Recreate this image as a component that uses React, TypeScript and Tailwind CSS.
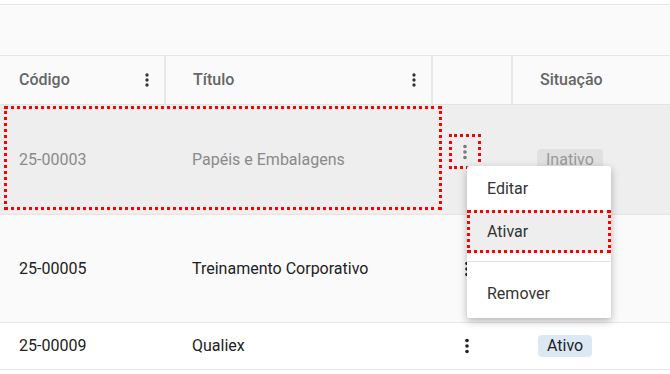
import React from 'react';

const Kebab: React.FC<{ size?: number; color?: string }> = ({ size = 20, color = '#333' }) => (
  <svg width={size} height={size} viewBox="0 0 24 24" fill={color}>
    <circle cx="12" cy="6" r="2" />
    <circle cx="12" cy="12" r="2" />
    <circle cx="12" cy="18" r="2" />
  </svg>
);

const cols = 'grid grid-cols-[166px_267px_80px_1fr]';

export default function App() {
  return (
    <div className="w-[670px] h-[374px] overflow-hidden bg-white font-['Roboto',sans-serif] text-base relative">
      <div className="h-[4px] bg-white" />
      <div className="h-[52px] bg-[#fafafa] border-y border-[#e6e6e6]" />

      {/* header */}
      <div className={`${cols} h-[48px] bg-[#fafafa] text-[#666] font-medium`}>
        <div className="flex items-center justify-between pl-[19px] pr-[7px] border-r-2 border-[#e8e8e8]">
          <span>Código</span>
          <Kebab size={20} />
        </div>
        <div className="flex items-center justify-between pl-[27px] pr-[7px] border-r-2 border-[#e8e8e8]">
          <span>Título</span>
          <Kebab size={20} />
        </div>
        <div className="border-r-2 border-[#e8e8e8]" />
        <div className="flex items-center pl-[27px]">Situação</div>
      </div>

      {/* row 1 (disabled) */}
      <div className={`${cols} h-[110px] bg-[#eeeeee] border-t border-[#e4e4e4] text-[#8a8a8a] relative`}>
        <div className="flex items-center pl-[19px]">25-00003</div>
        <div className="flex items-center pl-[26px]">Papéis e Embalagens</div>
        <div className="flex items-start pl-[16px] pt-[29px]">
          <div className="w-[32px] h-[35px] flex items-center justify-center border-[3px] border-dotted border-[#f00]">
            <Kebab size={22} color="#7a7a7a" />
          </div>
        </div>
        <div className="flex items-center pl-[24px]">
          <span className="bg-[#e0e0e0] text-[#999] rounded-[4px] px-[9px] h-[22px] leading-[22px]">Inativo</span>
        </div>
        <div className="absolute left-[4px] top-[1px] w-[438px] h-[104px] border-[3px] border-dotted border-[#f00]" />
      </div>

      {/* row 2 */}
      <div className={`${cols} h-[108px] bg-[#fafafa] border-t border-[#e4e4e4] text-[#222]`}>
        <div className="flex items-center pl-[19px]">25-00005</div>
        <div className="flex items-center pl-[26px]">Treinamento Corporativo</div>
        <div className="flex items-center pl-[23px]">
          <Kebab size={22} color="#222" />
        </div>
        <div />
      </div>

      {/* row 3 */}
      <div className={`${cols} h-[48px] bg-white border-y border-[#e6e6e6] text-[#222]`}>
        <div className="flex items-center pl-[19px]">25-00009</div>
        <div className="flex items-center pl-[26px]">Qualiex</div>
        <div className="flex items-center pl-[23px]">
          <Kebab size={22} color="#222" />
        </div>
        <div className="flex items-center pl-[25px]">
          <span className="bg-[#dce9f5] text-[#222] rounded-[4px] px-[9px] h-[22px] leading-[22px]">Ativo</span>
        </div>
      </div>

      {/* context menu */}
      <div className="absolute left-[467px] top-[166px] w-[144px] bg-white shadow-[0_3px_8px_rgba(0,0,0,0.28)] rounded-[2px] pt-[1px] pb-[3px] text-[#333]">
        <div className="h-[43px] flex items-center pl-[20px]">Editar</div>
        <div className="h-[43px] flex items-center pl-[20px] bg-[#eeeeee] relative">
          Ativar
          <div className="absolute inset-0 border-[3px] border-dotted border-[#f00]" />
        </div>
        <div className="mt-[8px] mb-[10px] h-px bg-[#e0e0e0]" />
        <div className="h-[43px] flex items-center pl-[20px]">Remover</div>
      </div>
    </div>
  );
}
